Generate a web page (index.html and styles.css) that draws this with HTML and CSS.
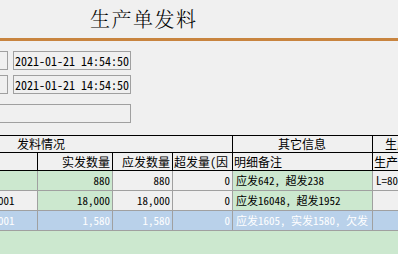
FILE: index.html
```html
<!DOCTYPE html>
<html lang="zh-CN">
<head>
	<meta charset="UTF-8">
	<title>生产单发料</title>
	<link rel="stylesheet" href="styles.css">
</head>
<body>
	<div class="head">
		<h1 class="title">生产单发料</h1>
	</div>
	<div class="bar"></div>

	<div class="form">
		<div class="form-row">
			<span class="box box-cut"></span>
			<span class="field">2021-01-21 14:54:50</span>
		</div>
		<div class="form-row">
			<span class="box box-cut"></span>
			<span class="field">2021-01-21 14:54:50</span>
		</div>
		<div class="form-row form-row-wide">
			<span class="box box-wide"></span>
		</div>
	</div>

	<div class="grid-wrap">
		<div class="grid">
			<!-- 表头第一行 -->
			<div class="th th-group th-left" style="grid-column: 1 / 5;">发料情况</div>
			<div class="th th-group th-center">其它信息</div>
			<div class="th th-group th-last">生产</div>
			<!-- 表头第二行 -->
			<div class="th"></div>
			<div class="th th-right">实发数量</div>
			<div class="th th-right">应发数量</div>
			<div class="th">超发量(因</div>
			<div class="th">明细备注</div>
			<div class="th">生产</div>
			<!-- 数据 -->
			<div class="td green"></div>
			<div class="td green num">880</div>
			<div class="td num">880</div>
			<div class="td num">0</div>
			<div class="td green">应发642, 超发238</div>
			<div class="td">L=80</div>

			<div class="td code">SC20210121001</div>
			<div class="td green num">18,000</div>
			<div class="td num">18,000</div>
			<div class="td num">0</div>
			<div class="td green">应发16048, 超发1952</div>
			<div class="td"></div>

			<div class="td code sel">SC20210121001</div>
			<div class="td sel num">1,580</div>
			<div class="td sel num">1,580</div>
			<div class="td sel num">0</div>
			<div class="td sel">应发1605, 实发1580, 欠发</div>
			<div class="td sel"></div>
		</div>
		<div class="grid-empty"></div>
	</div>
</body>
</html>
```

FILE: styles.css
```css
* {
	margin: 0;
	padding: 0;
	box-sizing: border-box;
}
html, body {
	height: 100%;
	overflow: hidden;
}
body {
	background-color: #f0f0f0;
	color: #000;
	font-family: "Noto Sans Mono CJK SC", "Noto Sans CJK SC", monospace;
	font-size: 12px;
}
.head {
	height: 38px;
	padding-left: 90px;
}
.title {
	font-family: "Noto Serif CJK SC", "Noto Sans CJK SC", serif;
	font-size: 20px;
	font-weight: 300;
	line-height: 38px;
	letter-spacing: 1.5px;
}
.bar {
	height: 3px;
	background-color: #c8843f;
}

/* 上面的查询条件 */
.form {
	display: flex;
	flex-direction: column;
	gap: 5px;
	padding-top: 10px;
}
.form-row {
	display: flex;
	gap: 5px;
	height: 19px;
}
.form-row-wide {
	margin-top: 5px;
}
.box, .field {
	height: 19px;
	border: 1px solid #a0a0a0;
	background-color: #f0f0f0;
}
.box-cut {
	width: 8px;
	border-left: none;
}
.box-wide {
	width: 131px;
	border-left: none;
}
.field {
	width: 118px;
	padding-left: 1px;
	font-size: 12px;
	line-height: 17px;
	white-space: nowrap;
	overflow: hidden;
}

/* 表格 */
.grid-wrap {
	margin-top: 12px;
	overflow: hidden;
}
.grid {
	display: grid;
	grid-template-columns: 101px 75px 60px 60px 140px 26px;
	grid-template-rows: 17px 18px 20px 20px 20px;
	margin-left: -63px;
	width: max-content;
	border-top: 1px solid #000;
}
.th, .td {
	border-right: 1px solid #a0a0a0;
	border-bottom: 1px solid #a0a0a0;
	white-space: nowrap;
	overflow: hidden;
}
.th {
	border-color: #000;
	font-size: 12px;
	line-height: 17px;
	padding: 0 2px 0 1px;
}
.th-group {
	line-height: 16px;
}
.th-left {
	padding-left: 80px;
}
.th-center {
	text-align: center;
}
.th-last {
	padding-left: 12px;
}
.th-right {
	text-align: right;
}
.td {
	font-size: 11px;
	line-height: 19px;
	padding: 0 2px 0 3px;
	background-color: #f0f0f0;
}
.td.code {
	padding-left: 6px;
}
.num {
	text-align: right;
}
.green {
	background-color: #cce8cf;
}
.sel {
	background-color: #b9d1ea;
	color: #fff;
}
.grid-empty {
	height: 40px;
	background-color: #cce8cf;
}
```
